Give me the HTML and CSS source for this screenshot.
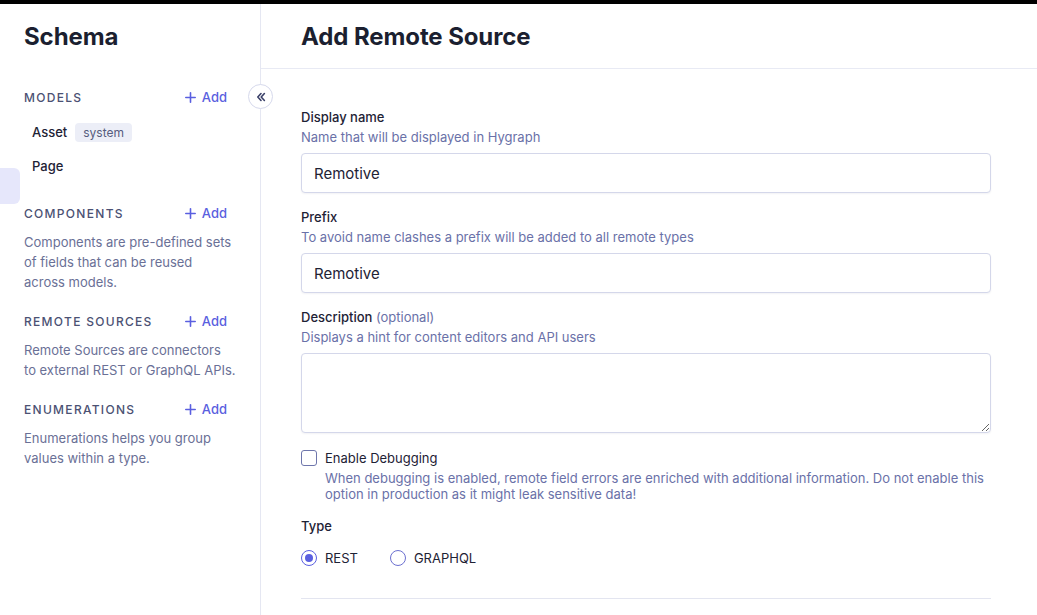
FILE: index.html
```html
<!DOCTYPE html>
<html>
<head>
<meta charset="utf-8">
<link rel="stylesheet" href="styles.css">
</head>
<body>
<div class="topbar"></div>
<div class="app">
  <aside class="sidebar">
    <div class="side-header"><h1>Schema</h1></div>
    <div class="drag-hint"></div>
    <section class="sec sec-models">
      <div class="sec-head"><span class="sec-title">Models</span><a class="add"><svg class="plus" width="11" height="11" viewBox="0 0 11 11" stroke="#5a5fe0" stroke-width="1.6" stroke-linecap="round"><path d="M5.5 0.8v9.4M0.8 5.5h9.4"/></svg>Add</a></div>
      <ul class="models">
        <li>Asset <span class="badge">system</span></li>
        <li>Page</li>
      </ul>
    </section>
    <section class="sec sec-after-models">
      <div class="sec-head"><span class="sec-title">Components</span><a class="add"><svg class="plus" width="11" height="11" viewBox="0 0 11 11" stroke="#5a5fe0" stroke-width="1.6" stroke-linecap="round"><path d="M5.5 0.8v9.4M0.8 5.5h9.4"/></svg>Add</a></div>
      <p class="sec-desc">Components are pre-defined sets of fields that can be reused across models.</p>
    </section>
    <section class="sec">
      <div class="sec-head"><span class="sec-title">Remote Sources</span><a class="add"><svg class="plus" width="11" height="11" viewBox="0 0 11 11" stroke="#5a5fe0" stroke-width="1.6" stroke-linecap="round"><path d="M5.5 0.8v9.4M0.8 5.5h9.4"/></svg>Add</a></div>
      <p class="sec-desc sec-desc-wide">Remote Sources are connectors<br>to external REST or GraphQL APIs.</p>
    </section>
    <section class="sec">
      <div class="sec-head"><span class="sec-title">Enumerations</span><a class="add"><svg class="plus" width="11" height="11" viewBox="0 0 11 11" stroke="#5a5fe0" stroke-width="1.6" stroke-linecap="round"><path d="M5.5 0.8v9.4M0.8 5.5h9.4"/></svg>Add</a></div>
      <p class="sec-desc">Enumerations helps you group values within a type.</p>
    </section>
    <button class="collapse" aria-label="Collapse">
      <svg width="12" height="12" viewBox="0 0 12 12" fill="none" stroke="#3b4169" stroke-width="1.6" stroke-linecap="round" stroke-linejoin="round"><path d="M6 2.5 2.8 6 6 9.5"/><path d="M9.4 2.5 6.2 6 9.4 9.5"/></svg>
    </button>
  </aside>
  <main class="main">
    <header class="main-header"><h2>Add Remote Source</h2></header>
    <form class="form">
      <div class="field">
        <label class="label">Display name</label>
        <div class="hint">Name that will be displayed in Hygraph</div>
        <input class="input" type="text" value="Remotive">
      </div>
      <div class="field">
        <label class="label">Prefix</label>
        <div class="hint">To avoid name clashes a prefix will be added to all remote types</div>
        <input class="input" type="text" value="Remotive">
      </div>
      <div class="field">
        <label class="label">Description <span class="opt">(optional)</span></label>
        <div class="hint">Displays a hint for content editors and API users</div>
        <textarea class="textarea"></textarea>
      </div>
      <div class="check-row">
        <span class="checkbox"></span>
        <div class="check-body">
          <div class="check-label">Enable Debugging</div>
          <div class="check-desc">When debugging is enabled, remote field errors are enriched with additional information. Do not enable this option in production as it might leak sensitive data!</div>
        </div>
      </div>
      <div class="type-field">
        <div class="label">Type</div>
        <div class="radios">
          <span class="radio-item"><span class="radio checked"></span>REST</span>
          <span class="radio-item"><span class="radio"></span>GRAPHQL</span>
        </div>
      </div>
      <hr class="divider">
    </form>
  </main>
</div>
</body>
</html>
```

FILE: styles.css
```css
* { box-sizing: border-box; }
html, body { margin: 0; padding: 0; }
body {
  font-family: Inter, "Noto Sans", sans-serif;
  color: #1e2235;
  background: #fff;
  height: 615px;
  overflow: hidden;
}
.topbar { height: 4px; background: #000; }
.app { display: flex; height: 611px; }

.sidebar {
  position: relative;
  width: 261px;
  flex: none;
  border-right: 1px solid #e5e7f2;
}
.side-header {
  height: 65px;
  display: flex;
  align-items: center;
  padding-left: 24px;
}
.side-header h1, .main-header h2 {
  margin: 0;
  font-size: 24px;
  font-weight: 700;
  color: #1b1f30;
  letter-spacing: -0.1px;
}
.drag-hint {
  position: absolute;
  left: 0;
  top: 164px;
  width: 20px;
  height: 36px;
  background: #e6e7fb;
  border-radius: 0 6px 6px 0;
}
.sec { padding: 19px 33px 0 24px; }
.sec-models { padding-top: 18px; }
.sec-after-models { padding-top: 20px; }
.sec-head {
  height: 20px;
  display: flex;
  align-items: center;
  justify-content: space-between;
}
.sec-title {
  font-size: 12px;
  font-weight: 500;
  text-transform: uppercase;
  letter-spacing: 1.3px;
  color: #4b5173;
}
.add {
  font-size: 13px;
  font-weight: 500;
  color: #5a5fe0;
  display: flex;
  align-items: center;
}
.plus { margin-right: 6px; display: block; }
.models { list-style: none; margin: 8px 0 0; padding: 0 0 0 8px; }
.models li {
  height: 34px;
  display: flex;
  align-items: center;
  font-size: 13px;
  font-weight: 500;
  color: #1e2235;
}
.badge {
  margin-left: 8px;
  background: #eceef7;
  color: #565c7e;
  font-size: 12px;
  font-weight: 400;
  height: 19px;
  line-height: 19px;
  padding: 0 8px;
  border-radius: 4px;
}
.sec-desc {
  margin: 9px -8px 0 0;
  font-size: 13px;
  line-height: 20px;
  color: #6a7096;
}
.sec-desc-wide { margin-right: -14px; }
.collapse {
  position: absolute;
  right: -13px;
  top: 80px;
  width: 25px;
  height: 25px;
  border-radius: 50%;
  border: 1px solid #d6d9ec;
  background: #fff;
  padding: 0;
  display: flex;
  align-items: center;
  justify-content: center;
  z-index: 2;
}

.main { flex: 1; min-width: 0; }
.main-header {
  height: 65px;
  display: flex;
  align-items: center;
  padding: 0 0 0 40px;
  border-bottom: 1px solid #e8eaf4;
}
.form { padding: 38px 46px 0 40px; }
.field { margin-bottom: 14px; }
.label {
  display: block;
  font-size: 13px;
  font-weight: 500;
  line-height: 20px;
  color: #1e2235;
}
.opt { color: #6a71a8; font-weight: 400; }
.hint {
  font-size: 13px;
  line-height: 20px;
  color: #6a71a8;
  margin-bottom: 6px;
}
.input, .textarea {
  display: block;
  width: 100%;
  border: 1px solid #d4d7ea;
  border-radius: 4px;
  box-shadow: 0 1px 2px rgba(30, 40, 90, 0.06);
  font-family: Inter, "Noto Sans", sans-serif;
  font-size: 15px;
  color: #1e2235;
  outline: none;
  background: #fff;
}
.input { height: 40px; padding: 0 12px; }
.textarea { height: 80px; padding: 10px 12px; resize: vertical; }
.check-row {
  display: flex;
  gap: 8px;
  margin-top: 15px;
}
.checkbox {
  flex: none;
  width: 16px;
  height: 16px;
  margin-top: 2px;
  border: 1.5px solid #6e76ac;
  border-radius: 3px;
}
.check-label {
  font-size: 13px;
  line-height: 20px;
  color: #1e2235;
}
.check-desc {
  font-size: 13px;
  line-height: 16px;
  color: #6a71a8;
  margin-top: 2px;
}
.type-field { margin-top: 14px; }
.radios {
  display: flex;
  gap: 32px;
  margin-top: 12px;
  height: 20px;
  align-items: center;
}
.radio-item {
  display: flex;
  align-items: center;
  gap: 8px;
  font-size: 13px;
  color: #1e2235;
}
.radio {
  width: 16px;
  height: 16px;
  border-radius: 50%;
  border: 1.5px solid #6c70d0;
  display: flex;
  align-items: center;
  justify-content: center;
}
.radio.checked { border-color: #5a5fe0; }
.radio.checked::after {
  content: "";
  width: 8px;
  height: 8px;
  border-radius: 50%;
  background: #5a5fe0;
}
.divider {
  margin: 30px 0 0;
  border: 0;
  border-top: 1px solid #e3e5f0;
}
```
